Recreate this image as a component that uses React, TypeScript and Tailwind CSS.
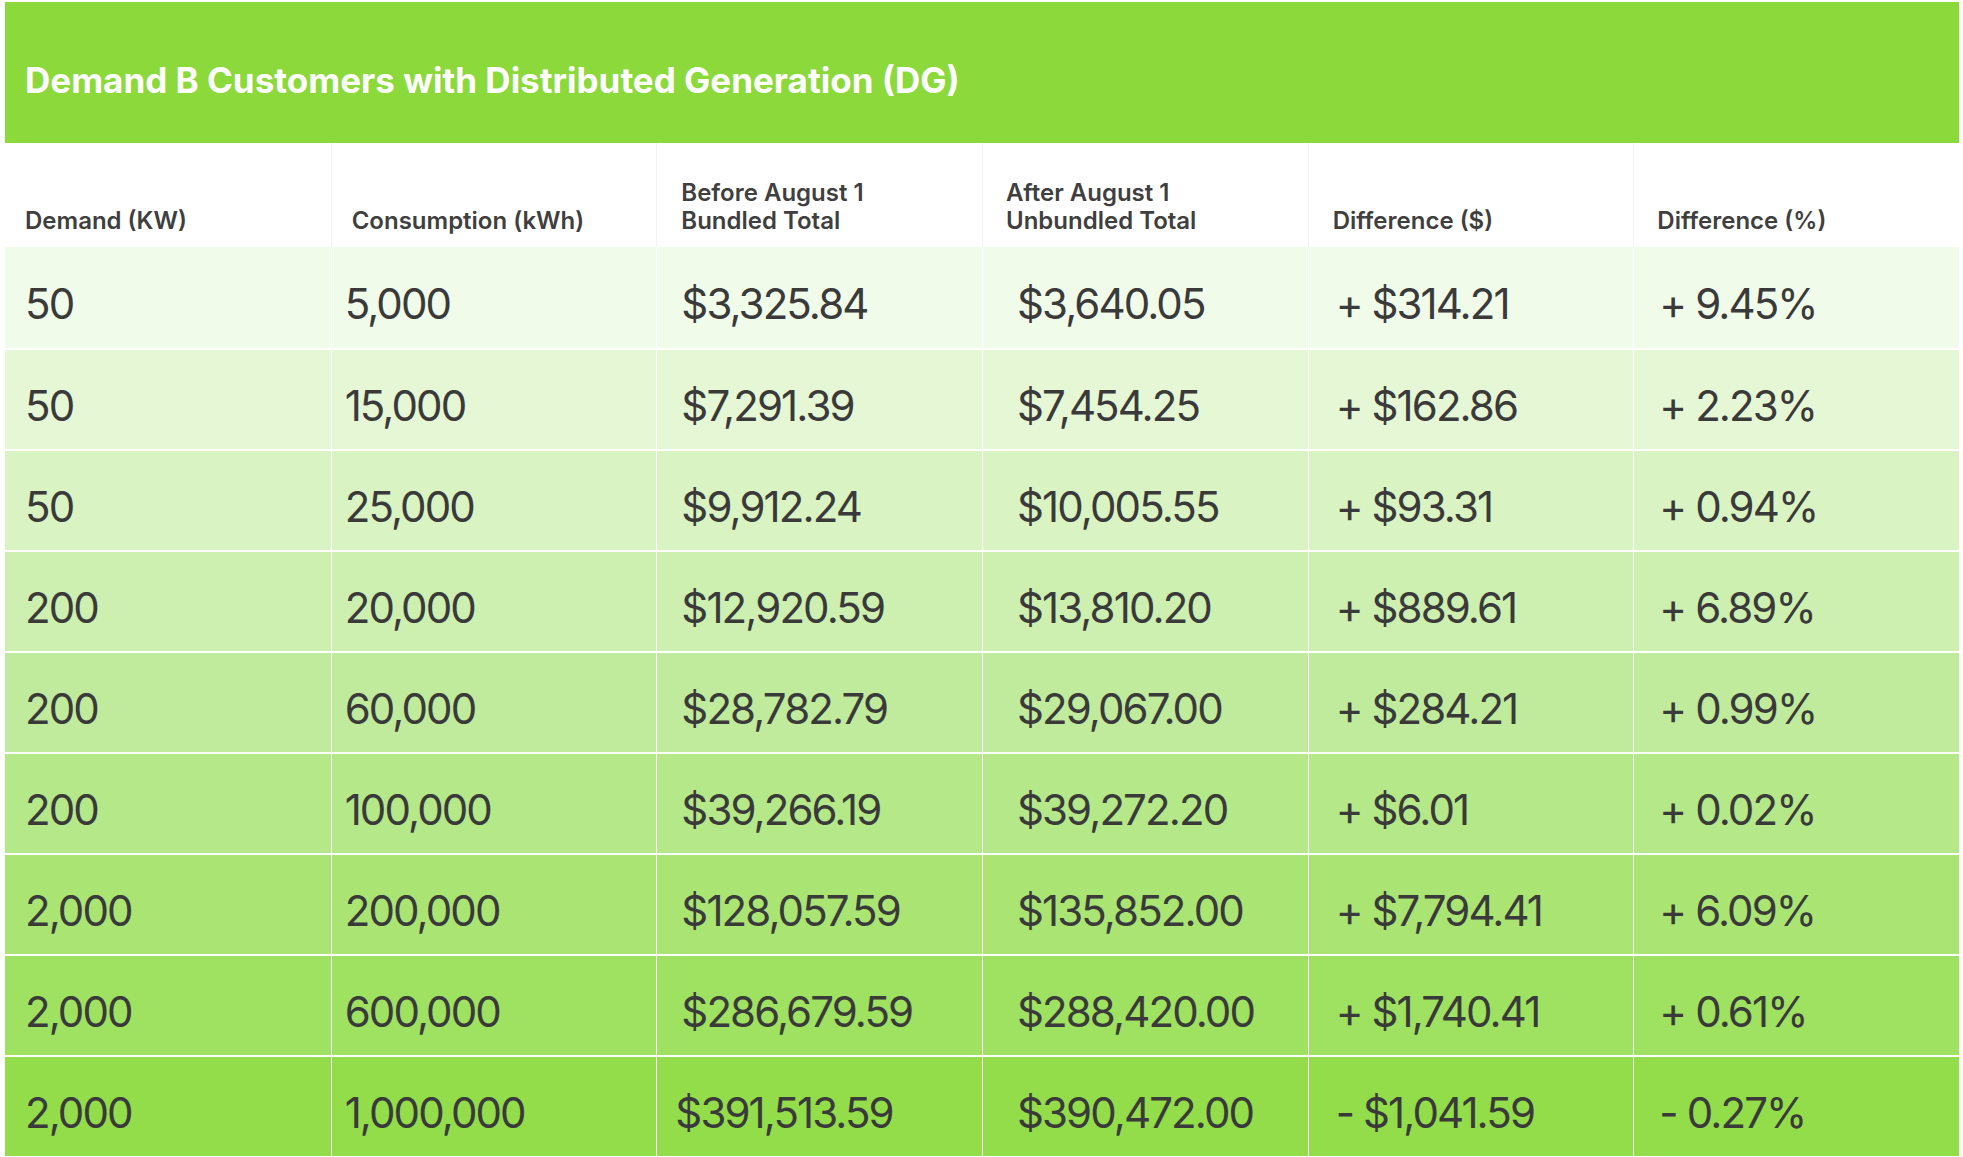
import React from "react";

const headers = [
  ["Demand (KW)"],
  ["Consumption (kWh)"],
  ["Before August 1", "Bundled Total"],
  ["After August 1", "Unbundled Total"],
  ["Difference ($)"],
  ["Difference (%)"],
];

const rows = [
  ["50", "5,000", "$3,325.84", "$3,640.05", "+ $314.21", "+ 9.45%"],
  ["50", "15,000", "$7,291.39", "$7,454.25", "+ $162.86", "+ 2.23%"],
  ["50", "25,000", "$9,912.24", "$10,005.55", "+ $93.31", "+ 0.94%"],
  ["200", "20,000", "$12,920.59", "$13,810.20", "+ $889.61", "+ 6.89%"],
  ["200", "60,000", "$28,782.79", "$29,067.00", "+ $284.21", "+ 0.99%"],
  ["200", "100,000", "$39,266.19", "$39,272.20", "+ $6.01", "+ 0.02%"],
  ["2,000", "200,000", "$128,057.59", "$135,852.00", "+ $7,794.41", "+ 6.09%"],
  ["2,000", "600,000", "$286,679.59", "$288,420.00", "+ $1,740.41", "+ 0.61%"],
  ["2,000", "1,000,000", "$391,513.59", "$390,472.00", "- $1,041.59", "- 0.27%"],
];

// light to dark green, top to bottom
const rowBg = [
  "bg-[#f1fbe9]",
  "bg-[#e6f7d6]",
  "bg-[#daf3c3]",
  "bg-[#cdefb0]",
  "bg-[#c1eb9c]",
  "bg-[#b5e888]",
  "bg-[#aae574]",
  "bg-[#9fe160]",
  "bg-[#93dd4b]",
];

const headPad = ["pl-[20px]", "pl-[20px]", "pl-[24px]", "pl-[23px]", "pl-[24px]", "pl-[23px]"];
const cellPad = ["pl-[20px]", "pl-[13px]", "pl-[24px]", "pl-[34px]", "pl-[27px]", "pl-[25px]"];

export default function App() {
  return (
    <div
      className="w-[1963px] h-[1157px] bg-white pt-[2px] pl-[5px] overflow-hidden"
      style={{ fontFamily: "Inter, 'Noto Sans', sans-serif" }}
    >
      <div className="w-[1954px]">
        {/* Title bar */}
        <div className="h-[141px] bg-[#8bd93a] flex items-center pl-[20px] pt-[16px]">
          <h1 className="text-[35px] font-bold text-white">
            Demand B Customers with Distributed Generation (DG)
          </h1>
        </div>

        {/* Column headers */}
        <div className="grid grid-cols-6 h-[104px] bg-white">
          {headers.map((lines, i) => (
            <div
              key={i}
              className={`flex flex-col justify-end pb-[12px] text-[24px] leading-[28px] font-semibold text-[#3f3f3f] ${headPad[i]} ${
                i > 0 ? "border-l border-[#f4f4f4]" : ""
              }`}
            >
              {lines.map((l) => (
                <span key={l}>{l}</span>
              ))}
            </div>
          ))}
        </div>

        {/* Data rows */}
        {rows.map((row, r) => (
          <div
            key={r}
            className={`grid grid-cols-6 h-[101px] ${rowBg[r]} ${r > 0 ? "border-t-2 border-white" : ""}`}
          >
            {row.map((v, c) => (
              <div
                key={c}
                className={`flex items-center pt-[12px] text-[42px] font-normal text-[#3a3a3a] tracking-[-0.045em] ${
                  r === 8 && c === 2 ? "pl-[18px]" : cellPad[c]
                } ${c > 0 ? "border-l border-white" : ""}`}
              >
                {v}
              </div>
            ))}
          </div>
        ))}
      </div>
    </div>
  );
}
